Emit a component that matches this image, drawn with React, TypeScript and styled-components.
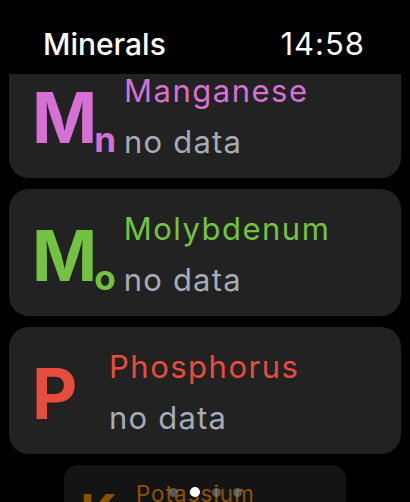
import React from 'react';
import styled, { createGlobalStyle } from 'styled-components';

const GlobalStyle = createGlobalStyle`
  html, body {
    margin: 0;
    padding: 0;
    background: #000;
  }
  body {
    font-family: 'Inter', 'Noto Sans', sans-serif;
  }
`;

type Mineral = {
  symbol: string;
  sub?: string;
  name: string;
  color: string;
  value: string;
};

const minerals: Mineral[] = [
  { symbol: 'M', sub: 'n', name: 'Manganese', color: '#d670d4', value: 'no data' },
  { symbol: 'M', sub: 'o', name: 'Molybdenum', color: '#74c241', value: 'no data' },
  { symbol: 'P', name: 'Phosphorus', color: '#e64d3d', value: 'no data' },
];

const App: React.FC<{}> = () => {
  return (
    <Screen>
      <GlobalStyle />
      <Header>
        <Title>Minerals</Title>
        <Clock>14:58</Clock>
      </Header>

      <Viewport>
        <List>
          {minerals.map((m, index) => (
            <Card key={index}>
              <Symbol color={m.color}>
                {m.symbol}
                {m.sub && <Sub>{m.sub}</Sub>}
              </Symbol>
              <Info>
                <Name color={m.color}>{m.name}</Name>
                <Value>{m.value}</Value>
              </Info>
            </Card>
          ))}

          {/* next card, shrinking as it scrolls in */}
          <Card $dim>
            <Symbol color="#e88a00">K</Symbol>
            <Info>
              <Name color="#e88a00">Potassium</Name>
              <Value>no data</Value>
            </Info>
          </Card>
        </List>
      </Viewport>

      <Dots>
        <Dot />
        <Dot $active />
        <Dot />
        <Dot />
      </Dots>
    </Screen>
  );
};

export default App;

/* Styling */
const Screen = styled.div`
  position: relative;
  width: 410px;
  height: 502px;
  background: #000;
  overflow: hidden;
  display: flex;
  flex-direction: column;
`;

const Header = styled.div`
  height: 74px;
  flex-shrink: 0;
  display: flex;
  justify-content: space-between;
  align-items: flex-start;
  padding: 24px 45px 0 43px;
  box-sizing: border-box;
  color: #fff;
  font-size: 30px;
  line-height: 40px;
`;

const Title = styled.div`
  font-weight: 500;
`;

const Clock = styled.div`
  font-weight: 400;
  font-size: 31px;
  letter-spacing: 1px;
`;

const Viewport = styled.div`
  flex: 1;
  overflow: hidden;
`;

const List = styled.div`
  display: flex;
  flex-direction: column;
  gap: 11px;
  margin-top: -23px;
  padding: 0 9px;
`;

const Card = styled.div<{ $dim?: boolean }>`
  height: 127px;
  flex-shrink: 0;
  box-sizing: border-box;
  border-radius: 20px;
  background: #222222;
  display: flex;
  align-items: flex-start;
  gap: 8px;
  padding-left: 23px;
  ${(p) =>
    p.$dim &&
    `
    transform: scale(0.72);
    transform-origin: top center;
    opacity: 0.6;
  `}
`;

const Symbol = styled.div<{ color: string }>`
  min-width: 69px;
  margin-top: 31px;
  color: ${(p) => p.color};
  font-size: 70px;
  font-weight: 700;
  line-height: 72px;
  letter-spacing: -3px;
  white-space: nowrap;
`;

const Sub = styled.span`
  font-size: 35px;
  line-height: 35px;
  vertical-align: -9px;
  letter-spacing: 0;
`;

const Info = styled.div`
  margin-top: 14px;
  display: flex;
  flex-direction: column;
  font-size: 31px;
  line-height: 51px;
`;

const Name = styled.div<{ color: string }>`
  color: ${(p) => p.color};
  letter-spacing: 1.5px;
`;

const Value = styled.div`
  color: #a6abb6;
  letter-spacing: 1.2px;
`;

const Dots = styled.div`
  position: absolute;
  left: 0;
  right: 0;
  bottom: 5px;
  display: flex;
  justify-content: center;
  align-items: center;
  gap: 12px;
`;

const Dot = styled.div<{ $active?: boolean }>`
  width: ${(p) => (p.$active ? 10 : 9)}px;
  height: ${(p) => (p.$active ? 10 : 9)}px;
  border-radius: 50%;
  background: ${(p) => (p.$active ? '#fff' : 'rgba(140, 140, 140, 0.55)')};
`;
